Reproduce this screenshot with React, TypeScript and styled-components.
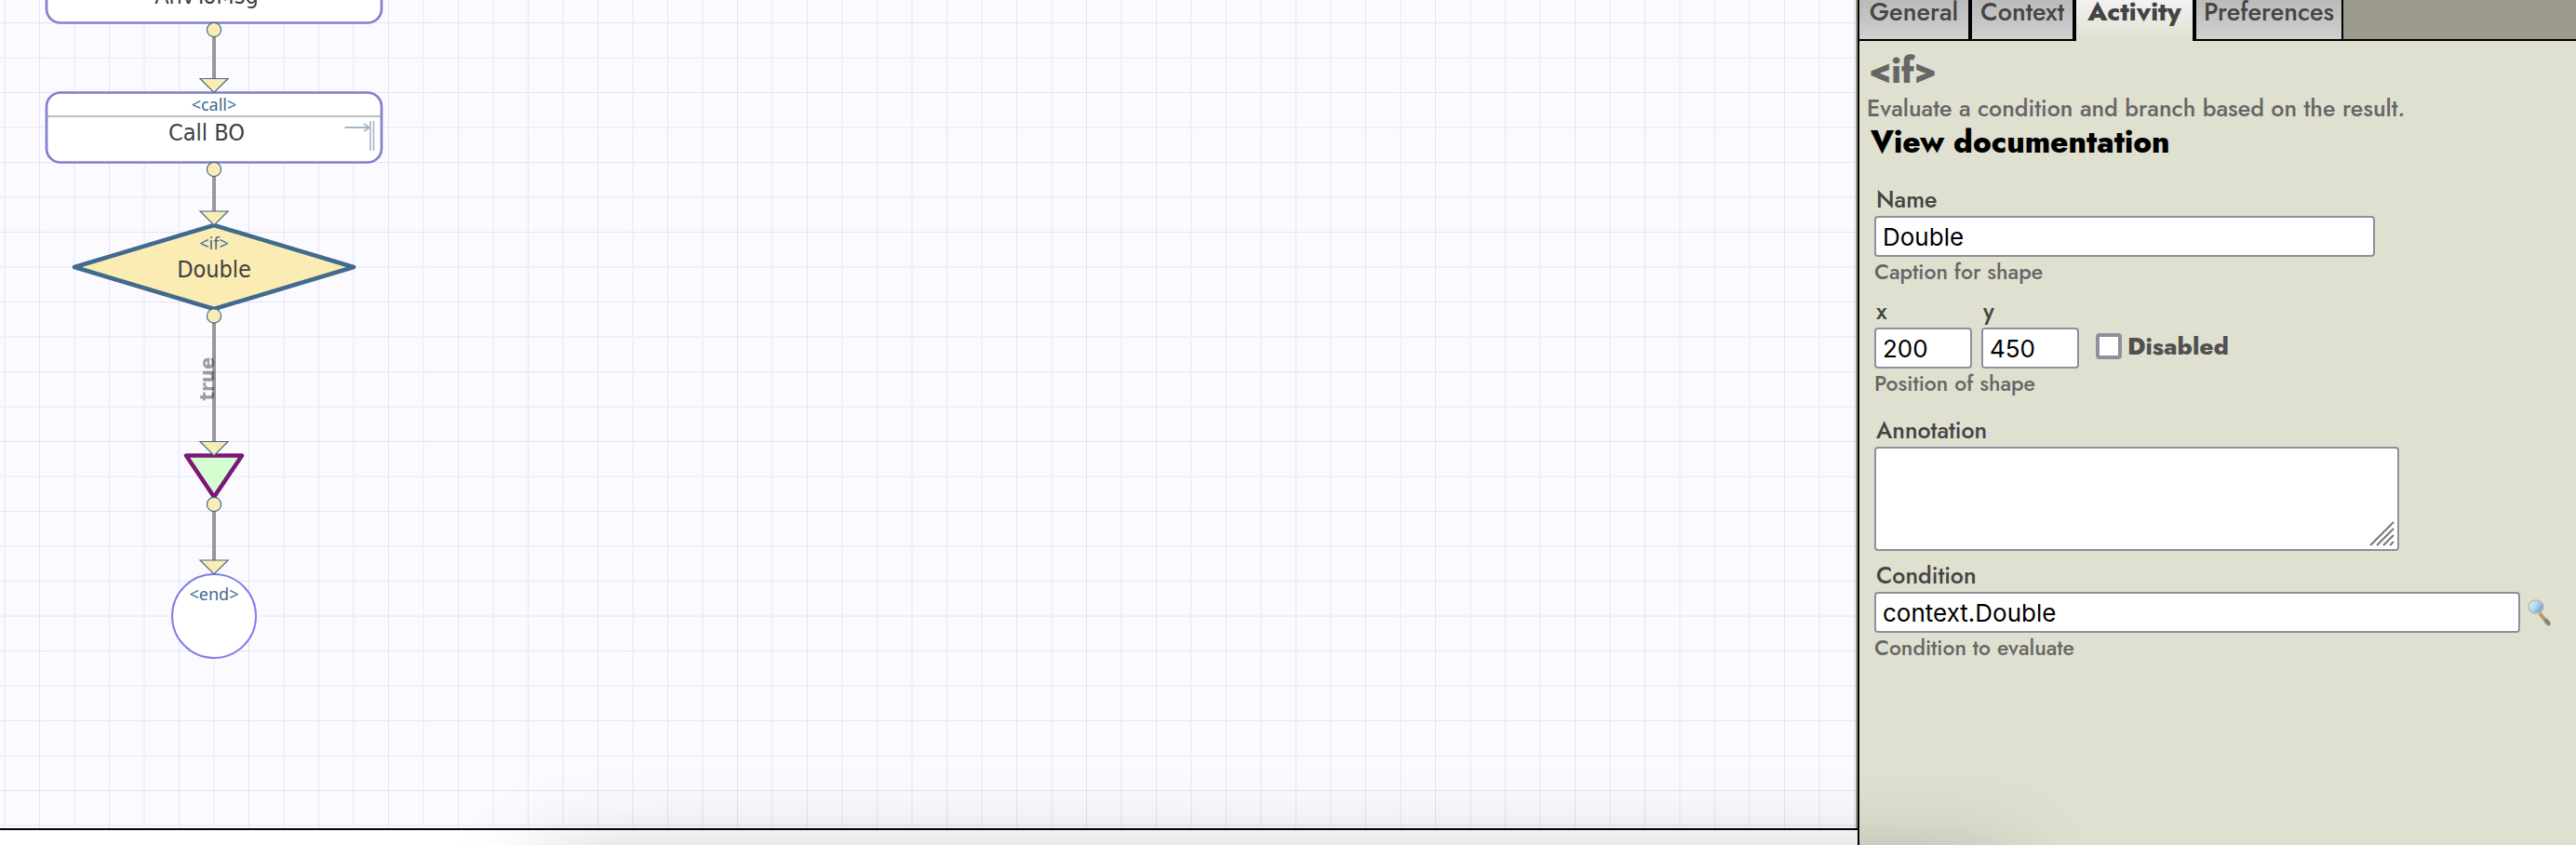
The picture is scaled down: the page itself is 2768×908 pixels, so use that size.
import React, { useId } from 'react';
import styled, { createGlobalStyle, css } from 'styled-components';

const colors = {
  canvas: '#fbfbff',
  panel: '#dfe0d0',
  bar: '#9c9a8d',
  field: '#8f8f9d',
  label: '#444444',
  hint: '#666666',
  shape: '#8080cc',
  steel: '#406b8d',
  sand: '#fbecb3',
};

const panelFont = '"Jost", "Lato", sans-serif';
const fieldFont = '"Inter", "Liberation Sans", sans-serif';
const diagramFont = '"DejaVu Sans Condensed", "DejaVu Sans", sans-serif';

const GlobalStyle = createGlobalStyle`
  *, *::before, *::after { box-sizing: border-box; }
  body { margin: 0; background: #ffffff; }
`;

const Page = styled.div`
  position: relative;
  display: flex;
  min-height: 100vh;
  overflow: hidden;
`;

const Editor = styled.main`
  flex: 1;
  min-width: 0;
  display: flex;
  flex-direction: column;
`;

const Canvas = styled.section`
  flex: 1;
  border-right: 2px solid ${colors.bar};
  background-color: ${colors.canvas};
  background-image:
    linear-gradient(90deg, #e4e2fb 1px, transparent 1px),
    linear-gradient(#e4e2fb 1px, transparent 1px),
    linear-gradient(90deg, #f0effe 2px, transparent 2px),
    linear-gradient(#f0effe 2px, transparent 2px);
  background-size: 75px 75px;
  background-position: 42px 0, 0 24px, 4px 0, 0 61px;
`;

const Diagram = styled.svg`
  display: block;
  width: 100%;
  height: 720px;
  font-family: ${diagramFont};
`;

const TagText = styled.text`
  font-family: "Noto Sans", sans-serif;
  font-size: 18px;
  fill: ${colors.steel};
`;

const CaptionText = styled.text`
  font-size: 25px;
  fill: #404040;
`;

const BranchText = styled.text`
  font-size: 22px;
  font-weight: 700;
  fill: #000000;
  fill-opacity: 0.4;
`;

const StatusBar = styled.footer`
  height: 18px;
  border-top: 2px solid #000000;
  background: #ffffff;
`;

const Panel = styled.aside`
  flex: 0 0 772px;
  border-left: 2px solid #000000;
  background: ${colors.panel};
  font-family: ${panelFont};
`;

const TabBar = styled.nav`
  display: flex;
  height: 44px;
  background: linear-gradient(#000000, #000000) bottom / 100% 2px no-repeat ${colors.bar};
`;

const Tab = styled.button<{ $active?: boolean; $width: number }>`
  flex: 0 0 ${(p) => p.$width}px;
  display: flex;
  align-items: flex-end;
  justify-content: center;
  padding: 0 0 13px;
  border: 0 solid #000000;
  border-width: 0 2px 2px;
  background: linear-gradient(#bababa, #d0d0d0);
  color: ${colors.label};
  font: 500 27px/32px ${panelFont};
  &:first-child { border-left-width: 0; }
  ${(p) =>
    p.$active &&
    css`
      border-bottom-width: 0;
      padding-bottom: 15px;
      background: linear-gradient(#f2f2f2, ${colors.panel});
      font-size: 28px;
      font-weight: 800;
    `}
`;

const Intro = styled.header`
  padding: 10px 8px 0;
`;

const Title = styled.h1`
  margin: 0 0 0 2px;
  color: ${colors.hint};
  font-size: 38px;
  line-height: 44px;
  font-weight: 800;
`;

const Summary = styled.p`
  margin: 0;
  color: ${colors.hint};
  font-size: 25px;
  line-height: 36px;
  font-weight: 500;
`;

const DocLink = styled.a`
  display: block;
  margin-left: 4px;
  color: #000000;
  font-size: 33px;
  line-height: 38px;
  font-weight: 800;
  text-decoration: none;
`;

const Form = styled.form`
  padding: 24px 22px 0 16px;
`;

const Field = styled.div<{ $gap?: number }>`
  display: flex;
  flex-direction: column;
  margin-bottom: ${(p) => p.$gap ?? 8}px;
`;

const Label = styled.label`
  padding-left: 2px;
  color: ${colors.label};
  font-size: 25px;
  line-height: 36px;
  font-weight: 500;
`;

const Hint = styled.span`
  color: ${colors.hint};
  font-size: 23px;
  line-height: 32px;
  font-weight: 500;
`;

const TextInput = styled.input<{ $width?: number }>`
  width: ${(p) => (p.$width ? `${p.$width}px` : '100%')};
  max-width: 100%;
  height: 44px;
  padding: 0 7px;
  border: 2px solid ${colors.field};
  border-radius: 4px;
  background: #ffffff;
  color: #000000;
  font: 400 26px/40px ${fieldFont};
`;

const NoteBox = styled.div`
  position: relative;
  width: 564px;
  max-width: 100%;
`;

const NoteArea = styled.textarea`
  display: block;
  width: 100%;
  height: 112px;
  border: 2px solid ${colors.field};
  border-radius: 4px;
  background: #ffffff;
  font: 400 26px/32px ${fieldFont};
  resize: none;
`;

const Grip = styled.svg`
  position: absolute;
  right: 5px;
  bottom: 5px;
  width: 27px;
  height: 27px;
  pointer-events: none;
`;

const PositionRow = styled.div`
  display: flex;
  align-items: flex-end;
  gap: 10px;
`;

const Coordinate = styled.div`
  display: flex;
  flex-direction: column;
`;

const CheckLabel = styled.label`
  display: flex;
  align-items: center;
  gap: 6px;
  height: 36px;
  margin: 0 0 6px 8px;
  color: #505050;
  font-size: 26px;
  font-weight: 800;
`;

const CheckBox = styled.input`
  appearance: none;
  width: 28px;
  height: 28px;
  margin: 0;
  border: 4px solid ${colors.field};
  border-radius: 4px;
  background: #ffffff;
`;

const ExpressionRow = styled.div`
  display: flex;
  align-items: center;
  gap: 6px;
`;

const SearchButton = styled.button`
  flex: 0 0 32px;
  height: 32px;
  padding: 0;
  border: 0;
  background: none;
  svg { display: block; width: 32px; height: 32px; }
`;

const WindowShadow = styled.div`
  position: absolute;
  top: calc(100% + 25px);
  left: 21%;
  right: 22%;
  height: 200px;
  box-shadow: 0 0 100px rgba(0, 0, 0, 0.28);
  pointer-events: none;
`;

const centre = 230;

function Link({ from, to }: { from: number; to: number }) {
  return (
    <g>
      <line x1={centre} x2={centre} y1={from + 7} y2={to - 14} stroke="#98989c" strokeWidth="4" />
      <circle cx={centre} cy={from} r="7.6" fill={colors.sand} stroke={colors.steel} strokeWidth="1.2" />
      <path d={`M${centre - 15} ${to - 15}h30l-15 15z`} fill={colors.sand} stroke={colors.steel} strokeWidth="1.2" />
    </g>
  );
}

function Tag({ y, children }: { y: number; children: string }) {
  return (
    <TagText x={centre} y={y} textAnchor="middle">
      {children}
    </TagText>
  );
}

function Caption({ x = centre, y, children }: { x?: number; y: number; children: string }) {
  return (
    <CaptionText x={x} y={y} textAnchor="middle">
      {children}
    </CaptionText>
  );
}

function FlowDiagram() {
  return (
    <Diagram role="img" aria-label="Process diagram">
      <rect x="50" y="-50.5" width="360" height="75" rx="15" fill="#fff" stroke={colors.shape} strokeWidth="2.7" />
      <Caption x={222} y={4}>AnvToMsg</Caption>

      <rect x="50" y="99.5" width="360" height="75" rx="15" fill="#fff" stroke={colors.shape} strokeWidth="2.7" />
      <line x1="51" x2="409" y1="125" y2="125" stroke="#bdbdbd" strokeWidth="2" />
      <g stroke="#a2b8c8" fill="none">
        <path d="M370.5 137H397M391 133l6 4-6 4" strokeWidth="1.8" />
        <path d="M398 130v32M401.5 130v32" strokeWidth="1.6" />
      </g>
      <Caption x={222} y={151}>Call BO</Caption>

      <path d="M80 287L230 242L380 287L230 332Z" fill={colors.sand} stroke={colors.steel} strokeWidth="4.5" strokeLinejoin="round" />
      <Caption y={298}>Double</Caption>

      <path d="M200 489.5H260L230 534Z" fill="#d5fdcf" stroke="#7a1878" strokeWidth="4.5" strokeLinejoin="round" />
      <circle cx={centre} cy="662" r="45" fill="#fff" stroke="#8080e8" strokeWidth="2" />

      <Link from={32} to={99.5} />
      <Link from={182} to={242} />
      <Link from={339.5} to={489.5} />
      <Link from={542} to={617} />

      <Tag y={119}>{'<call>'}</Tag>
      <Tag y={268}>{'<if>'}</Tag>
      <Tag y={645}>{'<end>'}</Tag>
      <BranchText transform="translate(230 407) rotate(-90)" textAnchor="middle">
        true
      </BranchText>
    </Diagram>
  );
}

function Magnifier() {
  const id = useId();
  return (
    <svg viewBox="0 0 32 32" aria-hidden="true">
      <defs>
        <linearGradient id={id} x1="0" y1="0.2" x2="1" y2="0.8">
          <stop offset="0" stopColor="#e6f1fa" />
          <stop offset="0.45" stopColor="#b5d5ee" />
          <stop offset="1" stopColor="#5b94cc" />
        </linearGradient>
      </defs>
      <path d="M15 17L24 28" stroke="#b89a68" strokeWidth="4" />
      <path d="M22 25L24.5 28" stroke="#8b8471" strokeWidth="4.5" strokeLinecap="round" />
      <ellipse cx="11" cy="10" rx="8" ry="7" fill={`url(#${id})`} stroke="#b2b8b8" strokeWidth="1.5" />
    </svg>
  );
}

const tabs = [
  { name: 'General', width: 119 },
  { name: 'Context', width: 112 },
  { name: 'Activity', width: 129 },
  { name: 'Preferences', width: 160 },
];

export default function App() {
  return (
    <>
      <GlobalStyle />
      <Page>
        <Editor>
          <Canvas>
            <FlowDiagram />
          </Canvas>
          <StatusBar />
        </Editor>
        <Panel>
          <TabBar role="tablist">
            {tabs.map((t) => (
              <Tab key={t.name} type="button" role="tab" $width={t.width} $active={t.name === 'Activity'} aria-selected={t.name === 'Activity'}>
                {t.name}
              </Tab>
            ))}
          </TabBar>
          <Intro>
            <Title>{'<if>'}</Title>
            <Summary>Evaluate a condition and branch based on the result.</Summary>
            <DocLink href="#documentation">View documentation</DocLink>
          </Intro>
          <Form>
            <Field>
              <Label htmlFor="name">Name</Label>
              <TextInput id="name" defaultValue="Double" $width={538} />
              <Hint>Caption for shape</Hint>
            </Field>
            <Field $gap={16}>
              <PositionRow>
                <Coordinate>
                  <Label htmlFor="x">x</Label>
                  <TextInput id="x" defaultValue="200" $width={105} />
                </Coordinate>
                <Coordinate>
                  <Label htmlFor="y">y</Label>
                  <TextInput id="y" defaultValue="450" $width={105} />
                </Coordinate>
                <CheckLabel>
                  <CheckBox type="checkbox" />
                  Disabled
                </CheckLabel>
              </PositionRow>
              <Hint>Position of shape</Hint>
            </Field>
            <Field>
              <Label htmlFor="annotation">Annotation</Label>
              <NoteBox>
                <NoteArea id="annotation" />
                <Grip viewBox="0 0 27 27" aria-hidden="true">
                  <path d="M1 26L26 1M8 26L26 8M15 26L26 15M22 26L26 22" stroke="#777" strokeWidth="2" fill="none" />
                </Grip>
              </NoteBox>
            </Field>
            <Field>
              <Label htmlFor="condition">Condition</Label>
              <ExpressionRow>
                <TextInput id="condition" defaultValue="context.Double" />
                <SearchButton type="button" aria-label="Edit expression">
                  <Magnifier />
                </SearchButton>
              </ExpressionRow>
              <Hint>Condition to evaluate</Hint>
            </Field>
          </Form>
        </Panel>
        <WindowShadow />
      </Page>
    </>
  );
}
